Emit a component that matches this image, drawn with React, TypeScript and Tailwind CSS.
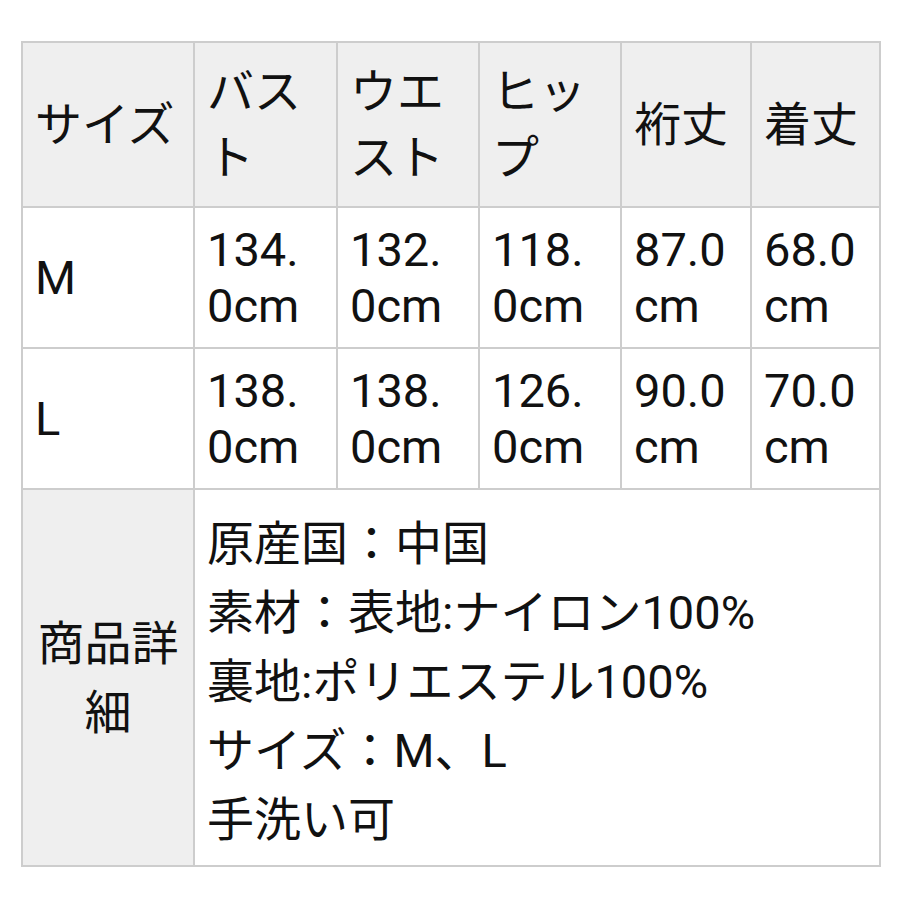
import React from 'react';

const headers = [
  ['サイズ'],
  ['バス', 'ト'],
  ['ウエ', 'スト'],
  ['ヒッ', 'プ'],
  ['裄丈'],
  ['着丈'],
];

const rows = [
  { size: 'M', values: [['134.', '0cm'], ['132.', '0cm'], ['118.', '0cm'], ['87.0', 'cm'], ['68.0', 'cm']] },
  { size: 'L', values: [['138.', '0cm'], ['138.', '0cm'], ['126.', '0cm'], ['90.0', 'cm'], ['70.0', 'cm']] },
];

const details = [
  '原産国：中国',
  '素材：表地:ナイロン100%',
  '裏地:ポリエステル100%',
  'サイズ：M、L',
  '手洗い可',
];

const Lines: React.FC<{ lines: string[] }> = ({ lines }) => (
  <>
    {lines.map((l, i) => (
      <React.Fragment key={i}>
        {i > 0 && <br />}
        {l}
      </React.Fragment>
    ))}
  </>
);

const cell = 'border-2 border-[#cdcdcd] px-[12px] align-middle text-left';

export default function App() {
  return (
    <div
      className="bg-white w-[900px] h-[900px] pt-[41px] pl-[21px] text-[#111111] text-[47px]"
      style={{ fontFamily: 'Roboto, "Noto Sans CJK JP", sans-serif' }}
    >
      <table className="table-fixed border-collapse w-[858px]">
        <colgroup>
          <col className="w-[172px]" />
          <col className="w-[143px]" />
          <col className="w-[142px]" />
          <col className="w-[142px]" />
          <col className="w-[130px]" />
          <col className="w-[129px]" />
        </colgroup>
        <tbody>
          <tr className="h-[165px] bg-[#efefef] leading-[66px]">
            {headers.map((h, i) => (
              <td key={i} className={cell}>
                <Lines lines={h} />
              </td>
            ))}
          </tr>
          {rows.map((r) => (
            <tr key={r.size} className="h-[141px] leading-[56px]">
              <td className={cell}>{r.size}</td>
              {r.values.map((v, i) => (
                <td key={i} className={cell}>
                  <Lines lines={v} />
                </td>
              ))}
            </tr>
          ))}
          <tr className="h-[377px] leading-[69px]">
            <td className={`${cell} bg-[#efefef] !text-center`}>
              <Lines lines={['商品詳', '細']} />
            </td>
            <td colSpan={5} className={`${cell} pt-[8px]`}>
              <Lines lines={details} />
            </td>
          </tr>
        </tbody>
      </table>
    </div>
  );
}
